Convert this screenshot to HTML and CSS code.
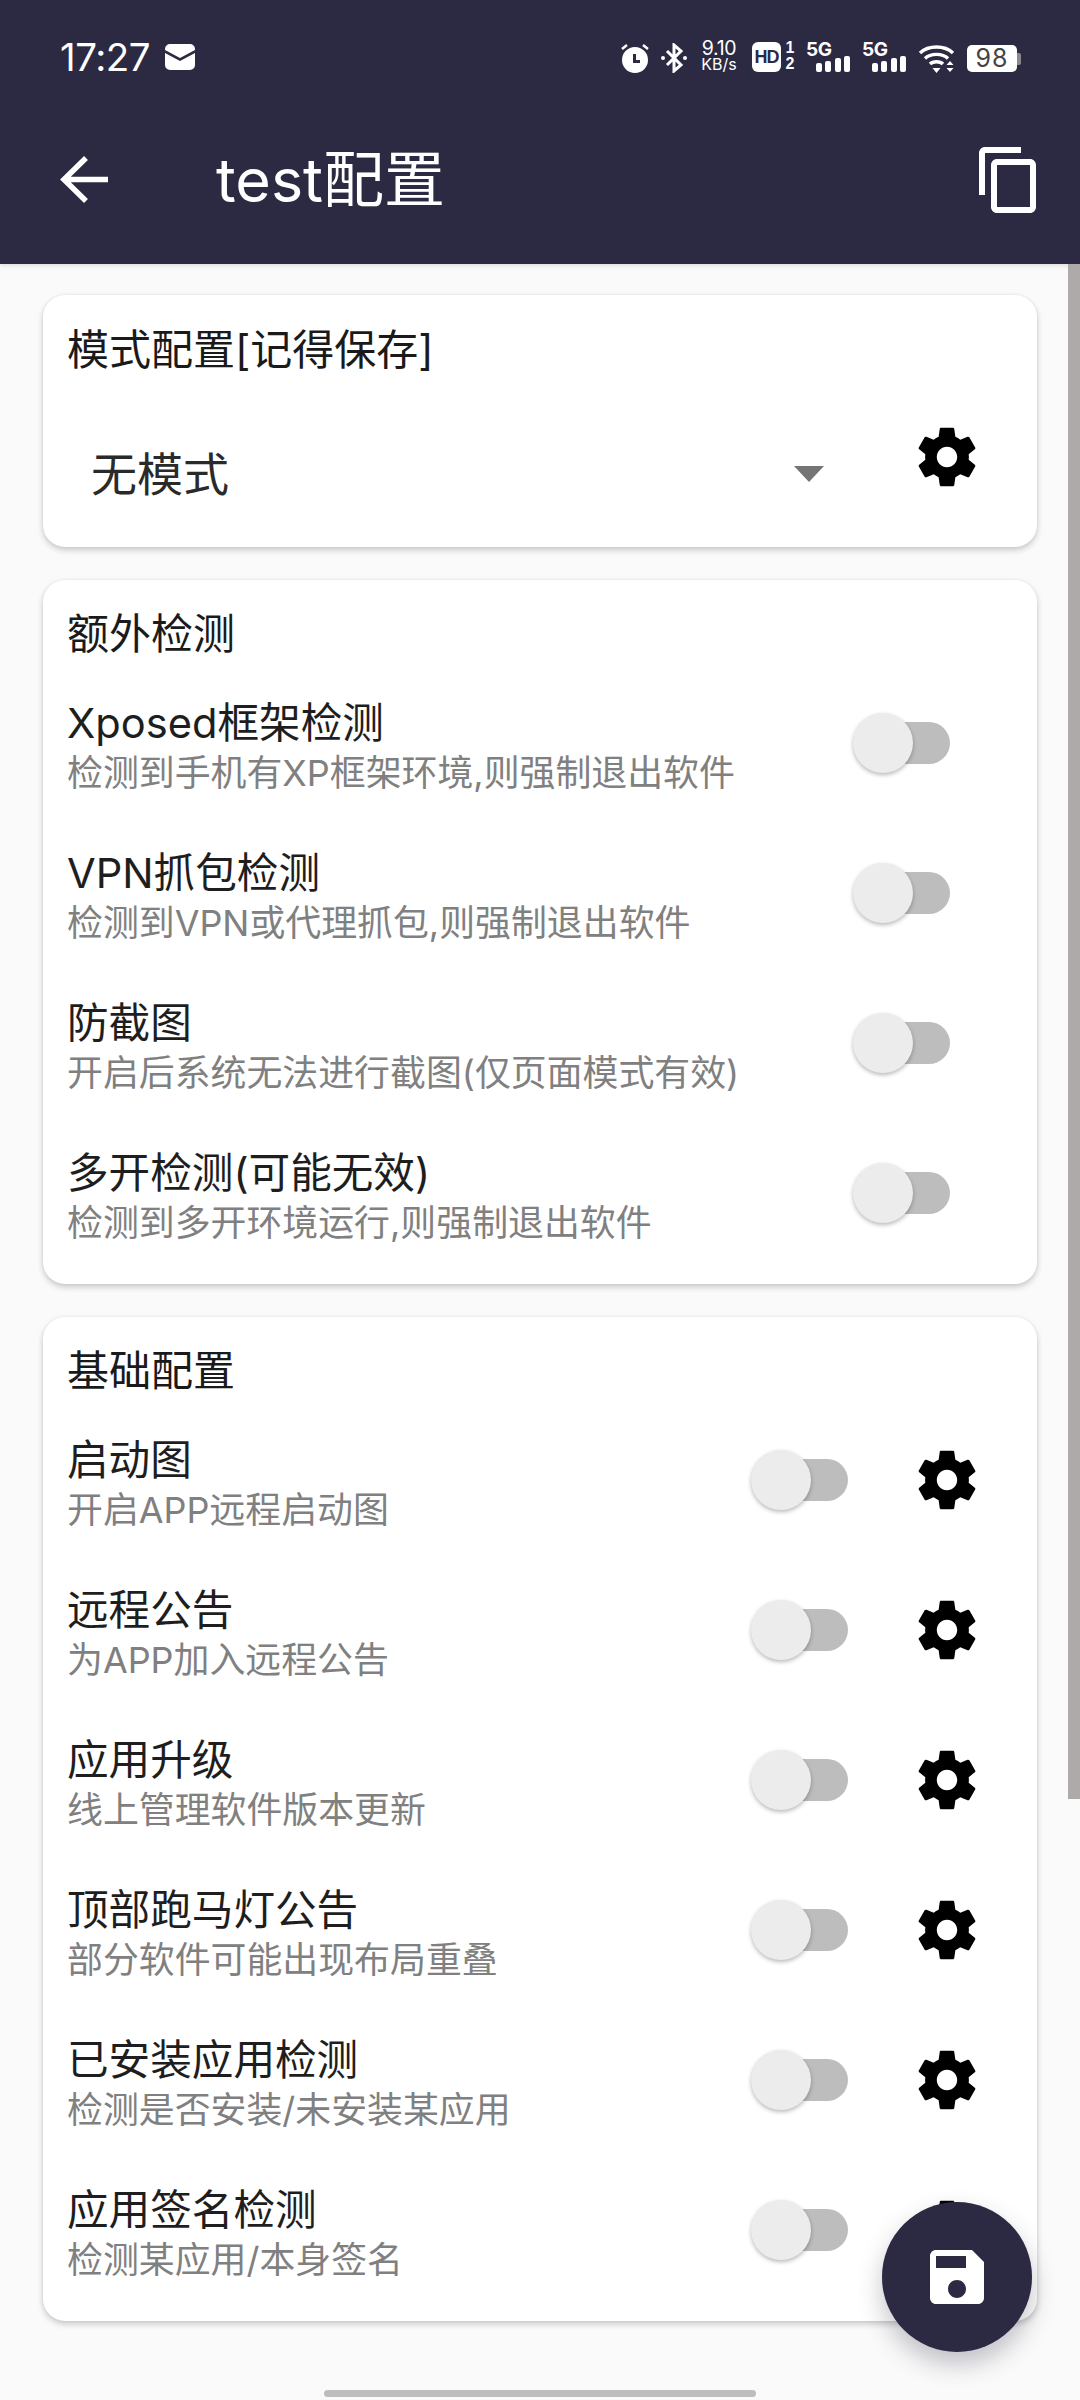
FILE: index.html
```html
<!DOCTYPE html>
<html lang="zh-CN">
<head>
<meta charset="utf-8">
<title>test配置</title>
<link rel="stylesheet" href="styles.css">
</head>
<body>
<div class="app">
  <header class="header">
    <div class="status">
      <div class="status-left">
        <span class="time">17:27</span>
        <svg class="mail" viewBox="0 0 30 26"><path fill="#fff" d="M5 0h20a5 5 0 0 1 5 5v1L15 14 0 6V5a5 5 0 0 1 5-5zM0 9l15 8 15-8v12a5 5 0 0 1-5 5H5a5 5 0 0 1-5-5z"/></svg>
      </div>
      <div class="status-right">
        <svg class="alarm" viewBox="0 0 28 30"><path fill="#fff" fill-rule="evenodd" d="M14 4a13 13 0 1 1 0 26 13 13 0 0 1 0-26zM12 11v9h7v-3h-4v-6z"/><path stroke="#fff" stroke-width="2.5" d="M1 6l5-4M27 6l-5-4"/></svg>
        <svg class="bt" viewBox="0 0 26 30"><path fill="none" stroke="#fff" stroke-width="3" d="M6 8l14 14-7 6V2l7 6L6 22"/><circle cx="2" cy="15" r="2" fill="#fff"/><circle cx="24" cy="15" r="2" fill="#fff"/></svg>
        <div class="speed"><div class="speed-num">9.10</div><div class="speed-unit">KB/s</div></div>
        <div class="hd"><span class="hd-badge">HD</span><span class="hd-nums"><span>1</span><span>2</span></span></div>
        <div class="sig"><span class="sig-label">5G</span><svg class="bars" viewBox="0 0 34 16"><rect x="0" y="7" width="6" height="9" rx="2"/><rect x="9" y="5" width="6" height="11" rx="2"/><rect x="19" y="2" width="6" height="14" rx="2"/><rect x="28" y="0" width="6" height="16" rx="2"/></svg></div>
        <div class="sig"><span class="sig-label">5G</span><svg class="bars" viewBox="0 0 34 16"><rect x="0" y="7" width="6" height="9" rx="2"/><rect x="9" y="5" width="6" height="11" rx="2"/><rect x="19" y="2" width="6" height="14" rx="2"/><rect x="28" y="0" width="6" height="16" rx="2"/></svg></div>
        <svg class="wifi" viewBox="0 0 36 30"><path fill="none" stroke="#fff" stroke-width="3.4" d="M1.500 10C10 2 26 2 34.500 10M6.500 15.500C12 10 24 10 29.500 15.500M11.500 21c3-3 10-3 13 0"/><path fill="#fff" d="M14 25h8l-4 5zM28 22l3.500-4 3.500 4zM28 25h7l-3.500 4z"/></svg>
        <div class="battery"><span class="battery-body">98</span><span class="battery-nub"></span></div>
      </div>
    </div>
    <div class="toolbar">
      <svg class="back" viewBox="0 0 48 48"><path fill="none" stroke="#fff" stroke-width="5.500" d="M48 23.500H4M26 2L4 23.500 26 45"/></svg>
      <h1 class="title">test配置</h1>
      <svg class="copy" viewBox="0 0 24 24"><path fill="#fff" d="M16 1H4c-1.100 0-2 .9-2 2v14h2V3h12V1zm3 4H8c-1.100 0-2 .9-2 2v14c0 1.100.9 2 2 2h11c1.100 0 2-.9 2-2V7c0-1.100-.9-2-2-2zm0 16H8V7h11v14z"/></svg>
    </div>
  </header>

  <main class="content">
    <section class="card card-mode">
      <div class="card-title mode-title">模式配置[记得保存]</div>
      <div class="mode-row">
        <span class="mode-value">无模式</span>
        <span class="arrow"></span>
        <svg class="gear gear-up" viewBox="0 0 24 24"><use href="#gear"/></svg>
      </div>
    </section>

    <section class="card">
      <div class="card-title">额外检测</div>
      <div class="row"><div class="txt"><div class="t">Xposed框架检测</div><div class="s">检测到手机有XP框架环境,则强制退出软件</div></div><span class="switch sw-wide"><i></i></span></div>
      <div class="row"><div class="txt"><div class="t">VPN抓包检测</div><div class="s">检测到VPN或代理抓包,则强制退出软件</div></div><span class="switch sw-wide"><i></i></span></div>
      <div class="row"><div class="txt"><div class="t">防截图</div><div class="s">开启后系统无法进行截图(仅页面模式有效)</div></div><span class="switch sw-wide"><i></i></span></div>
      <div class="row"><div class="txt"><div class="t">多开检测(可能无效)</div><div class="s">检测到多开环境运行,则强制退出软件</div></div><span class="switch sw-wide"><i></i></span></div>
    </section>

    <section class="card">
      <div class="card-title">基础配置</div>
      <div class="row"><div class="txt"><div class="t">启动图</div><div class="s">开启APP远程启动图</div></div><span class="switch"><i></i></span><svg class="gear" viewBox="0 0 24 24"><use href="#gear"/></svg></div>
      <div class="row"><div class="txt"><div class="t">远程公告</div><div class="s">为APP加入远程公告</div></div><span class="switch"><i></i></span><svg class="gear" viewBox="0 0 24 24"><use href="#gear"/></svg></div>
      <div class="row"><div class="txt"><div class="t">应用升级</div><div class="s">线上管理软件版本更新</div></div><span class="switch"><i></i></span><svg class="gear" viewBox="0 0 24 24"><use href="#gear"/></svg></div>
      <div class="row"><div class="txt"><div class="t">顶部跑马灯公告</div><div class="s">部分软件可能出现布局重叠</div></div><span class="switch"><i></i></span><svg class="gear" viewBox="0 0 24 24"><use href="#gear"/></svg></div>
      <div class="row"><div class="txt"><div class="t">已安装应用检测</div><div class="s">检测是否安装/未安装某应用</div></div><span class="switch"><i></i></span><svg class="gear" viewBox="0 0 24 24"><use href="#gear"/></svg></div>
      <div class="row"><div class="txt"><div class="t">应用签名检测</div><div class="s">检测某应用/本身签名</div></div><span class="switch"><i></i></span><svg class="gear" viewBox="0 0 24 24"><use href="#gear"/></svg></div>
    </section>
  </main>

  <div class="scrollbar"></div>
  <button class="fab" aria-label="保存"><svg viewBox="0 0 24 24"><path fill="#fff" d="M17 3H5c-1.110 0-2 .9-2 2v14c0 1.100.89 2 2 2h14c1.100 0 2-.9 2-2V7l-4-4zm-5 16c-1.660 0-3-1.340-3-3s1.340-3 3-3 3 1.340 3 3-1.340 3-3 3zm3-10H5V5h10v4z"/></svg></button>
  <div class="home"></div>
</div>
<svg class="defs" width="0" height="0"><defs><path id="gear" d="M19.430 12.980c.04-.32.07-.64.07-.98s-.03-.66-.07-.98l2.110-1.650c.19-.15.24-.42.12-.64l-2-3.460c-.12-.22-.39-.3-.61-.22l-2.490 1c-.52-.4-1.080-.73-1.690-.98l-.38-2.650C14.460 2.180 14.250 2 14 2h-4c-.25 0-.46.18-.49.42l-.38 2.650c-.61.25-1.170.59-1.690.98l-2.490-1c-.23-.09-.49 0-.61.22l-2 3.460c-.13.22-.07.49.12.64l2.110 1.650c-.04.32-.07.65-.07.98s.03.66.07.98l-2.110 1.650c-.19.15-.24.42-.12.64l2 3.460c.12.22.39.3.61.22l2.490-1c.52.4 1.080.73 1.690.98l.38 2.650c.03.24.24.42.49.42h4c.25 0 .46-.18.49-.42l.38-2.650c.61-.25 1.170-.59 1.690-.98l2.490 1c.23.09.49 0 .61-.22l2-3.460c.12-.22.07-.49-.12-.64l-2.110-1.650zM12 15.500c-1.930 0-3.500-1.570-3.500-3.500s1.570-3.500 3.500-3.500 3.500 1.570 3.500 3.500-1.570 3.500-3.500 3.500z"/></defs></svg>
</body>
</html>
```

FILE: styles.css
```css
* { box-sizing: border-box; }
html, body { margin: 0; padding: 0; }
body {
  width: 1080px;
  height: 2400px;
  overflow: hidden;
  background: #fafafa;
  font-family: "Inter", "Noto Sans CJK SC", sans-serif;
}
.defs { position: absolute; }
.app { position: relative; width: 1080px; height: 2400px; overflow: hidden; }

.header { height: 264px; background: #2b2a42; color: #fff; display: flex; flex-direction: column; box-shadow: 0 2px 4px rgba(43,42,66,.12); }
.status { height: 114px; padding: 41px 59px 0 60px; display: flex; justify-content: space-between; align-items: flex-start; }
.status-left { display: flex; align-items: center; gap: 15px; height: 32px; }
.time { font-size: 38.5px; line-height: 32px; letter-spacing: -0.5px; }
.mail { width: 30px; height: 26px; }
.status-right { display: flex; align-items: flex-start; margin-top: -1px; }
.alarm { width: 28px; height: 30px; margin: 3px 12px 0 0; }
.bt { width: 26px; height: 30px; margin: 3px 13px 0 0; }
.speed { width: 38px; margin-right: 14px; display: flex; flex-direction: column; align-items: center; }
.speed-num { font-size: 19.5px; line-height: 17px; height: 17px; letter-spacing: -0.3px; }
.speed-unit { font-size: 16px; line-height: 15px; height: 15px; }
.hd { display: flex; margin-right: 11px; }
.hd-badge { width: 29px; height: 30px; border-radius: 6px; margin-top: 2px; background: #fff; color: #2b2a42; font: 900 18px/30px "Liberation Sans", sans-serif; text-align: center; letter-spacing: -1px; }
.hd-nums { display: flex; flex-direction: column; align-items: center; width: 10px; margin-left: 4px; font: 700 16px/16px "Liberation Sans", sans-serif; }
.sig { position: relative; width: 44px; height: 32px; margin-right: 12px; }
.sig-label { font: 700 19px/20px "Inter", sans-serif; letter-spacing: -0.5px; display: block; }
.bars { position: absolute; right: 0; bottom: 0; width: 34px; height: 16px; fill: #fff; }
.wifi { width: 37px; height: 30px; margin: 3px 12px 0 0; }
.battery { display: flex; align-items: center; margin-top: 5px; }
.battery-body { width: 50px; height: 27px; border-radius: 5px; background: #fff; color: #444; font-size: 25px; line-height: 27px; text-align: center; letter-spacing: 1px; }
.battery-nub { width: 4px; height: 12px; background: #8a8a8a; border-radius: 0 2px 2px 0; }

.toolbar { flex: 1; display: flex; align-items: center; padding: 0 0 18px 60px; }
.back { width: 48px; height: 48px; }
.title { margin: 0 0 0 108px; font-size: 61px; line-height: 66px; font-weight: 400; flex: 1; }
.copy { width: 72px; height: 72px; margin-right: 35px; }

.content { padding: 31px 43px 0; display: flex; flex-direction: column; gap: 33px; }
.card { background: #fff; border-radius: 22px; box-shadow: 0 3px 6px rgba(0,0,0,.2), 0 0 3px rgba(0,0,0,.06); padding-bottom: 16px; }
.card-title { height: 88px; padding: 28px 0 0 24px; font-size: 42px; line-height: 52px; color: #1a1a1a; }
.mode-title { height: 128px; padding-top: 29px; }
.card-mode { padding-bottom: 22px; }
.mode-row { display: flex; align-items: center; padding-left: 48px; height: 102px; }
.mode-value { font-size: 46px; line-height: 60px; color: #2a2a2a; flex: 1; }
.arrow { width: 0; height: 0; border: 15px solid transparent; border-top: 16px solid #757575; border-bottom: 0; margin: 0 88px 0 0; }
.gear-up { transform: translateY(-17px); }

.row { height: 150px; display: flex; align-items: center; padding-left: 24px; }
.txt { flex: 1; padding-top: 7px; }
.t { font-size: 41.6px; line-height: 52px; color: #1e1e1e; }
.s { font-size: 35.9px; line-height: 46px; margin-top: 1px; color: #808080; }
.switch { position: relative; width: 88px; height: 42px; background: #bdbdbd; border-radius: 21px; margin-right: 64px; }
.switch i { position: absolute; left: -9px; top: -9px; width: 60px; height: 60px; border-radius: 50%; background: #ececec; box-shadow: 0 2px 4px rgba(0,0,0,.28); }
.sw-wide { margin-right: 87px; }
.gear { width: 70px; height: 70px; margin-right: 55px; fill: #000; }

.scrollbar { position: absolute; right: 0; top: 264px; width: 12px; height: 1535px; background: #aeaaaa; }
.fab { position: absolute; left: 882px; top: 2202px; width: 150px; height: 150px; border: 0; padding: 39px; border-radius: 50%; background: #2b2a42; box-shadow: 0 12px 24px rgba(43,42,66,.28); }
.fab svg { width: 72px; height: 72px; display: block; }
.home { position: absolute; left: 324px; top: 2390px; width: 432px; height: 7px; border-radius: 4px; background: #bdbdbd; }
```
